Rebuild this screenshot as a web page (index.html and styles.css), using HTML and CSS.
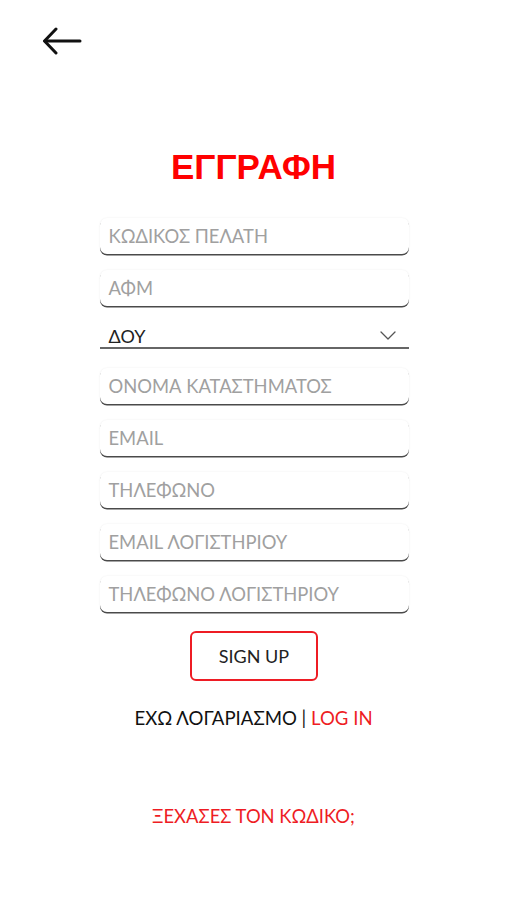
FILE: index.html
```html
<!DOCTYPE html>
<html lang="el">
<head>
<meta charset="utf-8">
<title>ΕΓΓΡΑΦΗ</title>
<link rel="stylesheet" href="styles.css">
</head>
<body>
<div class="page">
  <header class="topbar">
    <button class="back" aria-label="Back">
      <svg width="40" height="28" viewBox="0 0 40 28" fill="none" stroke="#111" stroke-width="3" stroke-linecap="round" stroke-linejoin="round">
        <path d="M38 14H3"/>
        <path d="M14 2L2.5 14L14 26"/>
      </svg>
    </button>
  </header>

  <h1 class="title">ΕΓΓΡΑΦΗ</h1>

  <form class="form">
    <div class="field"><span class="ph">ΚΩΔΙΚΟΣ ΠΕΛΑΤΗ</span></div>
    <div class="field"><span class="ph">ΑΦΜ</span></div>
    <div class="select">
      <span class="select-value">ΔΟΥ</span>
      <svg class="chev" width="16" height="9" viewBox="0 0 16 9" fill="none" stroke="#555" stroke-width="1.3" stroke-linecap="round" stroke-linejoin="round">
        <path d="M1 1L8 8L15 1"/>
      </svg>
    </div>
    <div class="field"><span class="ph">ΟΝΟΜΑ ΚΑΤΑΣΤΗΜΑΤΟΣ</span></div>
    <div class="field"><span class="ph">EMAIL</span></div>
    <div class="field"><span class="ph">ΤΗΛΕΦΩΝΟ</span></div>
    <div class="field"><span class="ph">EMAIL ΛΟΓΙΣΤΗΡΙΟΥ</span></div>
    <div class="field"><span class="ph">ΤΗΛΕΦΩΝΟ ΛΟΓΙΣΤΗΡΙΟΥ</span></div>

    <button type="button" class="signup">SIGN UP</button>
  </form>

  <p class="have">ΕΧΩ ΛΟΓΑΡΙΑΣΜΟ | <span class="red">LOG IN</span></p>

  <p class="forgot">ΞΕΧΑΣΕΣ ΤΟΝ ΚΩΔΙΚΟ;</p>
</div>
</body>
</html>
```

FILE: styles.css
```css
* { box-sizing: border-box; }

html, body {
  margin: 0;
  padding: 0;
  background: #fff;
}

body {
  font-family: Lato, "Noto Sans", sans-serif;
  color: #111;
}

.page {
  width: 507px;
  min-height: 900px;
  display: flex;
  flex-direction: column;
  align-items: center;
}

.topbar {
  align-self: stretch;
  padding: 27px 0 0 42px;
  height: 56px;
}

.back {
  border: 0;
  background: none;
  padding: 0;
  display: block;
  cursor: pointer;
}

.back svg { display: block; }

.title {
  margin: 91px 0 0;
  font-family: "Liberation Sans", Arial, sans-serif;
  font-weight: 700;
  font-size: 35px;
  line-height: 40px;
  color: #ff0000;
  letter-spacing: 0.1px;
}

.form {
  width: 309px;
  margin-top: 31px;
  display: flex;
  flex-direction: column;
  align-items: stretch;
  margin-left: 1px;
}

.field {
  height: 36px;
  border-radius: 7px;
  background: #fff;
  box-shadow: 0 1.5px 0.5px #4a4a4a, 0 0 2px rgba(0, 0, 0, 0.08);
  display: flex;
  align-items: center;
  padding-left: 9px;
  margin-bottom: 16px;
}

.ph {
  font-size: 18.4px;
  color: #a0a0a0;
}

.select {
  height: 27px;
  margin-bottom: 19px;
  border-bottom: 2px solid #666;
  display: flex;
  align-items: flex-end;
  justify-content: space-between;
  padding: 0 13px 0 9px;
}

.select-value {
  font-size: 18px;
  line-height: 21px;
  color: #222;
}

.chev { margin-bottom: 7px; }

.signup {
  align-self: center;
  margin-top: 3px;
  width: 128px;
  height: 50px;
  border: 2px solid #ee1c24;
  border-radius: 6px;
  background: #fff;
  font-family: Lato, "Noto Sans", sans-serif;
  font-size: 18px;
  color: #222;
  cursor: pointer;
  padding: 0;
}

.have {
  margin: 25px 0 0;
  font-size: 18.6px;
  line-height: 24px;
  color: #111;
}

.red { color: #ee1c24; }

.forgot {
  margin: 74px 0 0;
  font-size: 18.4px;
  line-height: 24px;
  color: #ee1c24;
}
```
